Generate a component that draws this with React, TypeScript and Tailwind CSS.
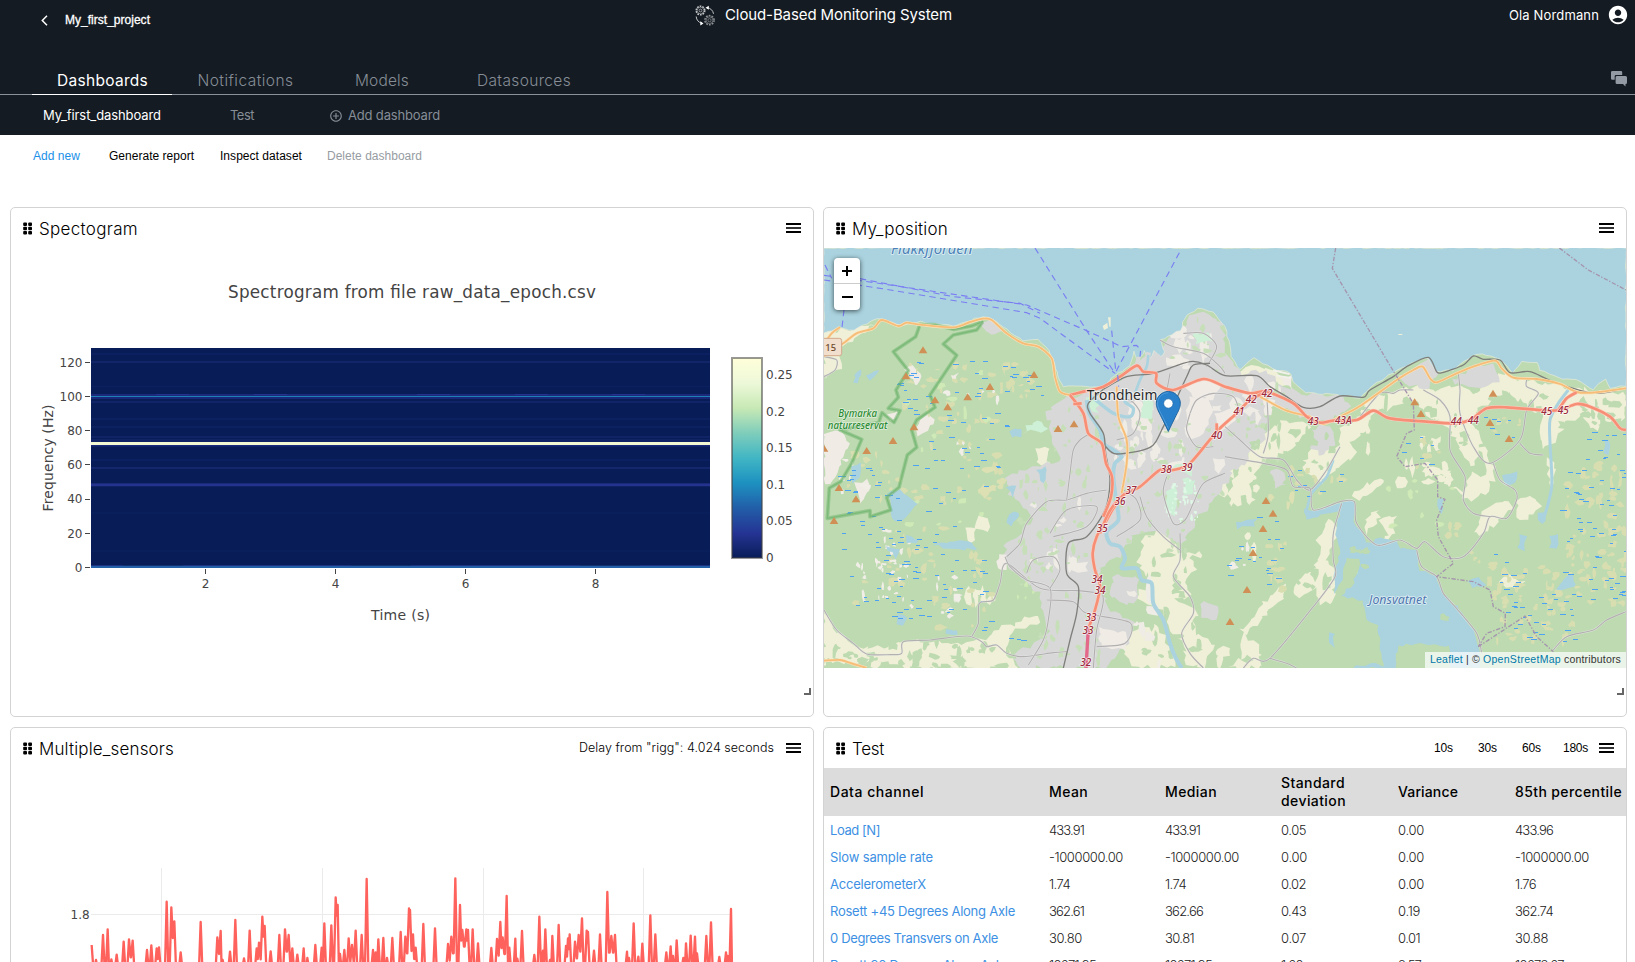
import { useLayoutEffect, useRef, useState } from "react";
import type { ReactNode } from "react";
import { MdAccountCircle, MdAddCircleOutline } from "react-icons/md";

type Pt = [number, number];

/* Spreads the letters of a single-line label over a given width. */
function Fit({ w, className = "", children }: { w: number; className?: string; children: string }) {
  const ref = useRef<HTMLSpanElement>(null);
  const [ls, setLs] = useState(0);
  useLayoutEffect(() => {
    const el = ref.current;
    if (!el) return;
    el.style.letterSpacing = "0px";
    const natural = el.getBoundingClientRect().width;
    const next = (w - natural) / children.length;
    el.style.letterSpacing = `${next}px`;
    setLs(next);
  }, [w, children]);
  return (
    <span ref={ref} className={`inline-block whitespace-pre ${className}`} style={{ letterSpacing: `${ls}px` }}>
      {children}
    </span>
  );
}

const INTER = "font-['Inter',sans-serif]";
const ARIAL = "font-['Liberation_Sans',sans-serif]";

function rng(seed: number) {
  let s = seed;
  return () => {
    s = (s * 1664525 + 1013904223) % 4294967296;
    return s / 4294967296;
  };
}

function parse(s: string): Pt[] {
  return s.split(" ").map((p) => p.split(",").map(Number) as Pt);
}

/* Jagged outline: each edge is cut into short steps that are pushed off the line. */
function rough(s: string, amp: number, seed = 7): string {
  const pts = parse(s);
  const r = rng(seed);
  const out: string[] = [];
  pts.forEach(([x, y], i) => {
    const [nx, ny] = pts[(i + 1) % pts.length];
    const n = Math.max(1, Math.round(Math.hypot(nx - x, ny - y) / 14));
    for (let k = 0; k < n; k++) {
      const t = k / n;
      out.push(`${(x + (nx - x) * t + (r() - 0.5) * amp).toFixed(1)},${(y + (ny - y) * t + (r() - 0.5) * amp).toFixed(1)}`);
    }
  });
  return out.join(" ");
}

/* Smooth curve through the points. */
function curve(s: string): string {
  const p = parse(s);
  let d = `M${p[0][0]},${p[0][1]}`;
  for (let i = 0; i < p.length - 1; i++) {
    const a = p[Math.max(0, i - 1)];
    const b = p[i];
    const c = p[i + 1];
    const e = p[Math.min(p.length - 1, i + 2)];
    d += ` C${b[0] + (c[0] - a[0]) / 7},${b[1] + (c[1] - a[1]) / 7} ${c[0] - (e[0] - b[0]) / 7},${c[1] - (e[1] - b[1]) / 7} ${c[0]},${c[1]}`;
  }
  return d;
}

/* x, y, width, height, count */
type Area = [number, number, number, number, number];

function specks(areas: Area[], min: number, max: number, seed: number): string {
  const r = rng(seed);
  let d = "";
  for (const [x, y, w, h, n] of areas) {
    for (let i = 0; i < n; i++) {
      const cx = x + r() * w;
      const cy = y + r() * h;
      const size = min + r() * (max - min);
      const k = 8;
      const stretch = 0.5 + r();
      for (let j = 0; j < k; j++) {
        const a = (j / k) * Math.PI * 2;
        const q = size * (0.45 + r() * 0.75);
        d += `${j ? "L" : "M"}${(cx + Math.cos(a) * q * stretch).toFixed(0)},${(cy + (Math.sin(a) * q) / stretch).toFixed(0)}`;
      }
      d += "Z";
    }
  }
  return d;
}

function dashes(areas: Area[], seed: number): string {
  const r = rng(seed);
  let d = "";
  for (const [x, y, w, h, n] of areas) {
    for (let i = 0; i < n; i++) {
      d += `M${Math.round((x + r() * w) / 3) * 3},${Math.round((y + r() * h) / 3) * 3 + 1.5}h${9 + Math.round(r() * 3) * 3}`;
    }
  }
  return d;
}

const SEA =
  "12,144 12,400 60,385 100,390 170,358 200,360 240,375 300,365 400,378 490,348 520,358 560,388 610,422 655,420 678,440 702,480 714,530 732,562 770,556 850,562 885,525 930,500 940,455 955,480 975,450 985,490 1000,450 1020,470 1035,455 1020,420 1080,390 1100,345 1135,325 1180,335 1215,380 1225,420 1235,470 1260,510 1300,475 1330,490 1370,510 1415,520 1420,545 1455,578 1560,585 1620,594 1660,555 1730,512 1790,482 1825,475 1850,515 1900,510 1955,468 1985,463 2040,478 2078,520 2105,485 2150,488 2160,510 2230,540 2270,537 2320,570 2355,535 2370,563 2418,557 2418,144";

const URBAN = [
  "1025,440 1080,395 1110,350 1150,335 1205,370 1225,470 1270,520 1340,515 1380,550 1450,580 1560,588 1590,620 1530,660 1460,660 1400,630 1330,610 1320,720 1260,760 1240,800 1225,850 1180,900 1130,960 1080,1040 1010,990 940,1000 910,1060 840,1100 850,1180 870,1230 940,1260 925,1340 850,1400 600,1404 575,1365 650,1330 690,1290 655,1180 560,1090 552,1040 600,1000 640,950 570,880 560,830 650,795 720,785 700,720 680,640 740,590 800,580 850,568 900,535 950,490",
  "480,360 515,362 545,392 500,402",
  "1740,530 1800,490 1830,475 1850,520 1830,560 1760,560",
  "1900,540 1960,500 2020,485 2035,540 1990,570 1920,555",
  "1480,690 1530,670 1540,730 1510,770 1475,750",
  "1215,560 1330,600 1340,700 1270,790 1215,830",
  "880,1130 950,1130 960,1190 920,1220 870,1180",
  "1145,1210 1195,1215 1190,1255 1150,1255",
  "1350,810 1390,820 1395,860 1365,860",
];

const FARM = [
  "1240,520 1300,490 1330,500 1400,535 1385,560 1330,560 1300,530",
  "1640,600 1730,570 1800,560 1850,570 1900,560 1960,575 2000,560 2060,510 2090,535 2230,560 2418,580 2418,660 2390,680 2350,660 2330,700 2290,650 2235,660 2210,730 2170,740 2160,640 2100,600 2050,570 2010,600 1960,640 1985,740 1960,800 1935,770 1890,690 1830,650 1800,620 1760,600 1720,620 1660,640 1640,700 1590,720 1610,760 1560,800 1500,850 1440,800 1480,750 1560,740 1560,690 1620,650",
  "1330,700 1400,660 1470,680 1440,720 1400,760 1330,790 1270,870 1240,920 1225,880 1260,800",
  "980,1000 1040,1000 1080,1050 1150,1060 1110,1080 1130,1110 1100,1130 1110,1190 1070,1200 1130,1240 1120,1290 1180,1340 1150,1400 1100,1400 1090,1320 1050,1300 1030,1230 1000,1220 940,1190 1000,1150 950,1080",
  "890,1310 930,1290 1010,1270 1040,1320 1070,1400 940,1400",
  "12,1220 40,1290 90,1330 150,1350 250,1330 330,1320 400,1330 490,1320 540,1290 640,1240 660,1260 580,1300 560,1340 600,1404 250,1404 200,1380 12,1390",
  "12,400 70,390 170,370 110,410 50,450 60,500 12,540",
  "1320,1230 1340,1200 1400,1150 1395,1190 1320,1260 1280,1310 1325,1340 1320,1404 1225,1404 1270,1360 1265,1290",
  "1530,960 1560,990 1530,1050 1520,1090 1550,1120 1540,1200 1500,1215 1490,1170 1430,1190 1425,1150 1480,1110 1500,1060 1490,1010",
  "1600,890 1640,850 1690,840 1670,870 1610,900",
  "1640,960 1670,930 1680,950 1640,1000",
  "1680,960 1730,950 1720,1000 1710,1020 1680,1040 1700,1000",
  "1900,860 1930,870 1960,820 1990,830 1995,790 1970,750 1990,740 2030,830 2000,870 1960,900 1930,900",
  "1990,930 2060,900 2080,920 2040,960 1980,1010 1965,990 1980,950",
  "2090,900 2140,890 2160,920 2120,960 2095,950",
  "2040,1140 2070,1130 2110,1150 2110,1160 2050,1160",
  "2185,780 2210,800 2200,860 2190,850",
  "1270,800 1320,790 1300,830 1250,920 1230,900",
  "650,750 690,740 685,790 660,800",
  "480,950 510,960 500,990 470,980",
  "440,985 465,980 470,1020 450,1030",
  "1190,820 1225,810 1225,880 1200,890",
];

const BARE = [
  "12,700 60,695 90,730 60,790 30,850 12,850",
  "255,505 275,490 305,530 290,560 270,530",
  "290,680 320,640 345,660 320,690 295,705",
  "395,530 415,520 405,555",
  "105,850 140,840 150,870 120,910",
  "1090,560 1150,540 1200,560 1180,600 1120,590",
  "1110,590 1165,590 1180,640 1150,700 1110,720 1095,640",
  "920,610 960,600 1000,640 990,700 940,690",
  "1185,640 1240,620 1250,660 1200,700",
  "840,1280 920,1300 920,1350 850,1340",
  "1370,530 1420,530 1415,570",
  "540,1060 560,1060 560,1110 530,1100",
  "200,640 235,630 240,650 215,660",
];

const PARK = [
  "1120,400 1170,395 1175,425 1130,430",
  "800,590 840,600 830,640 800,620",
  "1060,800 1120,780 1110,830",
  "1040,870 1070,860 1060,950 1035,930",
  "1090,830 1130,840 1110,890 1090,880",
  "970,600 1000,600 990,660 960,650",
  "620,680 670,660 680,690 610,700",
];

const LAKES = [
  "1455,925 1500,930 1560,908 1603,903 1603,960 1620,990 1640,1030 1680,1015 1730,1020 1740,1045 1790,1050 1800,1110 1850,1130 1865,1180 1910,1220 1960,1290 1975,1330 1980,1404 1890,1404 1890,1340 1800,1328 1735,1340 1725,1404 1690,1404 1675,1275 1640,1262 1625,1200 1562,1190 1600,1150 1620,1080 1580,1070 1565,1140 1545,1182 1540,1130 1562,1060 1548,1000 1560,935 1490,948 1455,960",
  "205,880 240,872 292,910 250,960 225,968 212,930",
  "340,1035 390,1022 440,1022 475,1045 400,1050",
  "560,860 590,860 575,890",
  "570,940 600,935 575,980 560,970",
  "570,690 605,685 600,710 575,710",
  "105,520 125,510 115,550 100,550",
  "140,530 180,510 150,545",
  "235,1245 260,1250 250,1280 232,1270",
  "380,1290 415,1292 410,1306 378,1304",
  "200,1040 240,1050 230,1080",
  "95,800 120,790 118,840 100,850",
  "260,1005 300,1020 290,1030 262,1025",
  "2048,825 2090,818 2085,850 2055,855",
  "2100,1000 2120,1010 2110,1050 2095,1040",
  "2190,1005 2215,1005 2210,1045 2190,1040",
  "2210,1165 2250,1120 2270,1150 2235,1170",
  "1945,1140 1975,1130 2000,1160 1960,1160",
  "1855,900 1870,895 1865,940 1855,930",
  "1530,1300 1545,1300 1540,1340 1530,1330",
  "2355,720 2370,720 2365,770 2355,760",
  "2155,940 2180,930 2170,970 2158,960",
  "650,810 680,800 675,850 660,840",
  "1250,965 1310,960 1300,980 1255,985",
  "1610,1395 1680,1392 1690,1404 1600,1404",
];

const RIVERS: [string, number][] = [
  ["800,600 808,640 840,690 850,730 880,750 905,770 885,790 880,830 888,900 895,960 860,995 870,1030 900,1040 915,1075 905,1105 950,1105 965,1140 995,1150 1000,1210 1030,1260 1050,1330 1065,1370 1085,1404", 12],
  ["815,590 880,640 930,650 940,625 915,605 920,575", 10],
  ["945,580 960,540 980,500 985,465", 8],
  ["1540,780 1520,830 1475,880 1460,930", 8],
  ["2245,570 2215,610 2190,660 2190,730 2195,860 2170,960", 9],
];

const MINOR = [
  "12,1230 50,1290 100,1330 140,1362 210,1364 245,1360 250,1325 330,1320 440,1308 485,1325 500,1340 530,1335 560,1360 610,1370 700,1358 740,1355",
  "455,1310 475,1270 478,1210 520,1200 540,1150 560,1090 660,1165 770,1172 850,1180",
  "560,1070 600,1030 620,970 680,905 740,900 800,880 860,870",
  "555,1070 570,1100 620,1140 690,1165 685,1260 670,1320 625,1395",
  "740,900 750,820 760,750 780,720 810,700",
  "690,1000 740,930 830,920 800,980 700,1010",
  "680,1200 760,1205 800,1240 930,1268 915,1330 830,1340",
  "830,1110 850,1200 830,1290 820,1404",
  "1080,1000 1080,1080 1060,1130 1110,1190 1120,1240 1085,1300 1110,1360 1150,1404",
  "960,890 980,950 1030,1010 1080,1050",
  "1040,830 1030,880 1060,970 1095,960 1120,910 1150,850 1215,820",
  "910,870 950,900 960,960 890,1010",
  "1020,420 1060,440 1150,460 1200,500 1215,520",
  "1090,400 1150,400 1190,440 1160,500",
  "1050,520 1040,590 1060,640 1030,660",
  "1110,640 1130,600 1180,580 1240,590 1260,640",
  "1110,640 1100,690 1130,740 1180,740",
  "890,600 930,600 960,640 940,700 890,720",
  "1215,680 1260,720 1320,770 1390,780 1430,840 1470,870 1520,810 1560,740",
  "1340,580 1345,700 1330,760",
  "1215,770 1330,790 1400,810 1420,860 1470,865 1480,930 1560,905 1603,905 1610,970 1670,1035 1740,1020 1790,1045 1815,1025 1870,1070 1930,1070 1990,1000 2010,950 2060,955 2090,900 2085,870 2040,840 2020,790",
  "1620,650 1680,580 1720,580 1740,570 1780,570",
  "1810,570 1860,600 1890,650 1890,750 1935,830 1930,900 1960,940 2010,950",
  "1915,520 1920,570 1920,640 1960,740 2010,790 2100,720 2120,630 2155,580 2120,560 2120,540",
  "2100,730 2130,760 2170,765",
  "1565,910 1540,1000 1540,1080 1545,1130 1480,1220 1350,1375 1300,1375 1270,1404",
  "1350,1375 1400,1390 1430,1404",
  "1790,1050 1805,1100 1850,1130 1870,1180 1905,1220 1970,1300 1985,1360",
  "2200,1350 2240,1310 2320,1290 2360,1260 2418,1235",
  "12,530 45,510 50,480 12,470",
  "690,1165 720,1110 700,1070 640,1080 620,1120",
];

const RAIL = [
  "850,568 920,530 1000,520 1110,485 1160,495 1215,527 1310,527 1350,560 1400,590 1450,622 1500,620 1560,588 1630,592 1650,570 1720,530 1760,500 1825,472 1850,515 1870,517 1930,495 1960,468 1990,478 2040,480 2070,518 2130,515 2200,545 2320,580 2418,565",
  "850,568 805,610 810,640 850,700 857,760 870,840 855,930 800,1010 745,1030 740,1120 775,1160 770,1240 750,1320 730,1404",
  "857,740 890,762 990,742 1030,680 1100,530 1120,495 1170,490",
];

const SECONDARY = [
  "12,432 35,400 60,382",
  "12,468 70,430 110,400 160,385 185,360 235,378 260,368 300,374 400,382 450,366 490,356 515,360 560,400 610,430 655,440 695,475 705,530 720,575 750,585",
  "890,560 895,650 920,720 920,790 905,880",
  "1320,590 1400,632 1470,650 1510,672 1560,650 1620,618 1730,540 1780,510 1808,500 1830,535 1850,547 1910,520 1960,500 2025,482 2045,505 2080,533 2150,537 2220,552 2270,576 2320,578 2418,565",
  "12,1382 60,1380 100,1392 140,1404",
];

const TRUNK = [
  "750,585 790,575 850,560 900,530 950,497 970,515 1008,520 1010,550 1060,570 1150,537 1215,560 1290,580 1340,575 1420,610 1460,650 1500,668 1540,662 1610,660 1660,632 1710,655 1820,665 1900,670 1950,660 2000,625 2060,622 2180,632 2220,630 2270,612 2310,620 2370,650 2400,685 2418,690",
  "1340,575 1290,600 1250,640 1190,695 1110,790 1060,810 1020,810 960,860 910,885 880,925 860,960 830,1010 818,1060 825,1110 840,1160 825,1230 805,1285",
  "900,890 865,940 840,1000",
  "750,585 790,640 805,700 845,730 858,790 876,830 873,890 850,950",
  "760,612 785,610",
  "2215,630 2240,595 2270,577",
  "1190,670 1190,700",
];

const FERRIES = [
  "12,226 620,315 800,392 905,440 950,436 962,450 960,470",
  "12,240 200,268 620,338 660,355 885,520",
  "120,236 400,290 600,310 660,340",
  "645,144 800,392 885,520",
  "1078,158 885,520",
  "875,392 888,520",
  "15,195 35,235",
  "72,330 66,382",
  "893,525 896,560",
];

const BORDERS = [
  "1547,144 1537,205 1712,500 1780,610 1783,690 1760,700 1730,770 1755,800 1815,790 1853,840 1853,890 1875,898 1850,960 1855,1010 1900,1090 1850,1130 1960,1145 2010,1170 2020,1220 2056,1240 2055,1280 2000,1300 1975,1340",
  "2218,144 2305,210 2418,270",
  "1975,1340 2115,1248 2150,1310 2200,1355",
];

const PEAKS: Pt[] = [
  [309, 450], [258, 528], [345, 600], [383, 621], [443, 591], [510, 560], [642, 524], [282, 681], [219, 722], [140, 752], [714, 686], [762, 672],
  [12, 745], [57, 863], [108, 897], [42, 962], [1784, 606], [1803, 641], [2019, 580], [2010, 668], [2067, 716], [1338, 902], [1359, 940],
  [1329, 986], [1299, 1058], [1281, 1169], [1230, 1265],
];

const EXITS: [string, number, number][] = [
  ["40", 1190, 717], ["41", 1257, 644], ["42", 1294, 610], ["42", 1341, 592], ["43", 1480, 676], ["43A", 1570, 671], ["44", 1909, 676],
  ["44", 1960, 672], ["45", 2180, 644], ["45", 2230, 642], ["39", 1101, 814], ["38", 1039, 818], ["37", 933, 882], ["36", 900, 914],
  ["35", 847, 997], ["34", 831, 1150], ["34", 840, 1182], ["33", 813, 1264], ["33", 804, 1303], ["32", 797, 1399],
];

const RESERVE =
  "490,364 455,378 400,388 345,374 300,374 287,410 220,455 265,512 228,570 235,592 205,625 240,632 222,667 186,638 176,668 60,690 125,718 95,790 62,845 28,864 22,955 150,932 150,950 212,930 200,892 237,862 262,765 290,742 275,690 290,660 345,622 330,585 410,466 370,432 400,405 470,390 488,366";

const MARSH: Area[] = [
  [230, 460, 170, 180, 14], [400, 480, 270, 110, 22], [310, 640, 250, 140, 18], [60, 760, 180, 150, 12], [230, 790, 320, 130, 14],
  [180, 970, 240, 160, 10], [350, 1060, 170, 240, 18], [100, 1050, 250, 220, 12], [1340, 1020, 60, 150, 12], [1400, 800, 170, 90, 12],
  [1780, 700, 80, 150, 6], [2240, 780, 178, 420, 74], [2000, 1070, 110, 130, 16], [2030, 1180, 230, 150, 34], [2090, 1030, 160, 140, 10],
  [2280, 1180, 130, 40, 5], [1880, 970, 60, 60, 5], [2000, 650, 100, 80, 6], [1950, 1050, 100, 70, 4],
];

const POOLS: Area[] = [
  [230, 470, 170, 180, 18], [400, 480, 270, 110, 20], [310, 640, 250, 140, 20], [30, 790, 200, 120, 20], [230, 790, 320, 130, 12],
  [60, 930, 340, 120, 22], [190, 990, 100, 180, 15], [90, 1100, 300, 160, 26], [340, 1060, 150, 240, 18], [1210, 950, 190, 210, 20],
  [1400, 800, 170, 90, 10], [2220, 760, 198, 440, 60], [2010, 1060, 110, 130, 10], [2040, 1180, 230, 150, 28], [1990, 650, 100, 100, 7],
  [1730, 650, 120, 150, 6], [2290, 670, 120, 110, 8], [480, 1220, 160, 110, 6],
];

const WHITES: Area[] = [
  [180, 980, 90, 170, 16], [100, 1080, 190, 140, 22], [350, 1130, 70, 130, 12], [30, 780, 120, 100, 8], [400, 720, 60, 60, 4],
  [380, 560, 160, 50, 5], [1215, 1030, 80, 80, 5], [960, 1380, 60, 20, 2],
];

const CITY_GREEN: Area[] = [
  [600, 800, 230, 180, 26], [600, 980, 200, 180, 30], [660, 1180, 180, 200, 24], [880, 660, 330, 270, 50], [700, 620, 140, 130, 14],
  [1040, 360, 170, 160, 18], [1215, 560, 180, 230, 22], [920, 940, 180, 120, 14],
];

const FARM_GREEN: Area[] = [
  [1620, 600, 320, 150, 34], [1960, 560, 240, 120, 20], [2210, 600, 200, 100, 16], [1280, 680, 260, 130, 22], [970, 1040, 170, 330, 26],
  [20, 1330, 560, 70, 40], [1280, 1200, 100, 180, 6], [1430, 1080, 100, 120, 8],
];

const FARM_BITS: Area[] = [
  [1170, 760, 60, 160, 8], [160, 1340, 420, 60, 24], [440, 1160, 80, 70, 6], [1180, 1340, 40, 50, 2], [1640, 720, 330, 130, 12],
  [1250, 830, 100, 80, 5], [1860, 780, 60, 60, 5], [1270, 1000, 40, 110, 3],
];

const CITY_LIGHT: Area[] = [
  [880, 600, 320, 200, 30], [1030, 380, 150, 130, 14], [620, 870, 160, 280, 12], [1230, 540, 140, 120, 10], [850, 1100, 160, 260, 8],
];

function MapDrawing() {
  return (
    <svg className="block h-[420px] w-[802px]" viewBox="12 144 2406 1260" fill="none" strokeLinejoin="round" strokeLinecap="butt">
      <rect x="0" y="100" width="2430" height="1320" fill="#bddab1" />
      {FARM.map((p, i) => (
        <polygon key={i} points={rough(p, 17, i + 3)} fill="#eff0d7" />
      ))}
      <path d={specks(FARM_BITS, 9, 22, 5)} fill="#eff0d7" />
      {URBAN.map((p, i) => (
        <polygon key={i} points={rough(p, 16, i + 30)} fill="#d8d8d8" />
      ))}
      {BARE.map((p, i) => (
        <polygon key={i} points={rough(p, 10, i + 50)} fill="#f0ece5" />
      ))}
      <path d={specks(FARM_GREEN, 7, 18, 9)} fill="#bddab1" />
      <path d={specks(CITY_LIGHT, 8, 26, 91)} fill="#efece5" />
      <path d={specks(CITY_GREEN, 4, 13, 12)} fill="#c6dfb9" />
      {PARK.map((p, i) => (
        <polygon key={i} points={rough(p, 14, i + 70)} fill="#cdf0d6" />
      ))}
      <path d={specks([[1030, 840, 110, 130, 34]], 3, 8, 15)} fill="#dff8e6" />
      <path d={specks(MARSH, 5, 15, 21)} fill="#d8deb0" />
      <path d={specks([[490, 800, 60, 110, 9], [1330, 880, 90, 40, 3]], 10, 20, 26)} fill="#dce0b2" />
      <path d={specks(WHITES, 4, 11, 23)} fill="#f1eee8" />
      <path d={specks([[200, 500, 350, 500, 14], [1700, 830, 200, 200, 8], [550, 1130, 100, 100, 4], [1580, 1110, 50, 60, 5]], 5, 13, 61)} fill="#cfeab6" />
      {LAKES.map((p, i) => (
        <polygon key={i} points={rough(p, 9, i + 90)} fill="#aad3df" />
      ))}
      <path d={specks([[1590, 1030, 50, 80, 7], [1840, 1230, 40, 40, 2]], 7, 18, 33)} fill="#bddab1" />
      <polygon points={rough(SEA, 5, 4)} fill="#aad3df" stroke="#e9ebdc" strokeWidth="2" />
      <path d="M935,530 l15,-60 12,0 -8,40 10,0 15,-55 14,3 -8,45 14,-4 12,-38 10,4 -12,60z" fill="#d8d8d8" />
      <path d="M848,378 l14,-10 2,16 -12,6zM864,352 l8,0 0,28 -4,0zM1735,402h12v3h-12z" fill="#eff0d7" />
      <path d="M1360,508 l50,12 -2,5 -50,-11zM1370,524 l45,8 -2,5 -45,-8z" fill="#f3f1ec" />
      {RIVERS.map(([p, w], i) => (
        <path key={i} d={curve(p)} stroke="#aad3df" strokeWidth={w} />
      ))}
      <path d={dashes(POOLS, 44)} stroke="#4da3f2" strokeWidth="3" />
      <polyline points={RESERVE} stroke="#6db36c" strokeWidth="11" opacity=".5" />
      <polyline points={RESERVE} stroke="#62ad62" strokeWidth="4" opacity=".5" />
      {MINOR.map((p, i) => (
        <g key={i}>
          <path d={curve(p)} stroke="#ececec" strokeWidth="6" opacity=".7" />
          <path d={curve(p)} stroke="#b3b0b0" strokeWidth="3.4" />
        </g>
      ))}
      {RAIL.map((p, i) => (
        <path key={i} d={curve(p)} stroke="#7f7f7c" strokeWidth="4" />
      ))}
      {SECONDARY.map((p, i) => (
        <g key={i}>
          <path d={curve(p)} stroke="#fbe3bd" strokeWidth="9" />
          <path d={curve(p)} stroke="#f6bd78" strokeWidth="5.5" />
        </g>
      ))}
      {TRUNK.map((p, i) => (
        <g key={i}>
          <path d={curve(p)} stroke="#fbcfc0" strokeWidth="11" />
          <path d={curve(p)} stroke="#f78f77" strokeWidth="8" />
        </g>
      ))}
      <path d="M805,1285 L798,1404" stroke="#e4688a" strokeWidth="10" />
      {FERRIES.map((p, i) => (
        <polyline key={i} points={p} stroke="#7b7ef2" strokeWidth="3.4" strokeDasharray="19 13" />
      ))}
      {BORDERS.map((p, i) => (
        <polyline key={i} points={p} stroke="#a594ad" strokeWidth="4" strokeDasharray="13 5 4 5" />
      ))}
      {PEAKS.map(([x, y], i) => (
        <path key={i} d={`M${x},${y - 11} l13,21 h-26z`} fill="#d08f55" />
      ))}
      <rect x="-10" y="415" width="75" height="52" rx="7" fill="#f2decd" stroke="#d3a98a" strokeWidth="3" />
      <g fontFamily="'Noto Sans', sans-serif" paintOrder="stroke" strokeLinejoin="round" textAnchor="middle">
        <text x="32" y="453" fontSize="28" fontWeight="500" fill="#6b4a2b">15</text>
        <g fontStyle="italic" fontSize="31" fontWeight="500" fill="#9c2a3c" stroke="#fff" strokeWidth="5" strokeOpacity=".7">
          {EXITS.map(([t, x, y], i) => (
            <text key={i} x={x} y={y} textLength={t.length * 16.5} lengthAdjust="spacingAndGlyphs">{t}</text>
          ))}
        </g>
        <text x="335" y="161" fontSize="42" fontStyle="italic" fill="#4c82b8" stroke="#fff" strokeWidth="5" strokeOpacity=".6" textLength="244" lengthAdjust="spacingAndGlyphs">Flakkfjorden</text>
        <text x="1733" y="1212" fontSize="37" fontStyle="italic" fill="#4f77b0" stroke="#fff" strokeWidth="5" strokeOpacity=".6" textLength="172" lengthAdjust="spacingAndGlyphs">Jonsvatnet</text>
        <g fontSize="31" fontStyle="italic" fontWeight="500" fill="#2c8c33" stroke="#fff" strokeWidth="5" strokeOpacity=".55">
          <text x="113" y="652" textLength="117" lengthAdjust="spacingAndGlyphs">Bymarka</text>
          <text x="113" y="688" textLength="179" lengthAdjust="spacingAndGlyphs">naturreservat</text>
        </g>
        <text x="906" y="600" fontSize="41" fill="#2b2b2b" stroke="#fff" strokeWidth="6" strokeOpacity=".65" textLength="212" lengthAdjust="spacingAndGlyphs">Trondheim</text>
      </g>
      <g transform="translate(1007.5 573) scale(3)">
        <path d="M12.5,.5C5.9,.5 .5,5.9 .5,12.4c0,5.6 3,8.6 12,28 9-19.400 12-22.400 12-28C24.500,5.900 19.100,.5 12.500,.5z" fill="#2a81cb" stroke="#1f659f" strokeWidth="1" />
        <path d="M12.500,1.700C6.600,1.700 1.700,6.500 1.700,12.400c0,5 2.800,8 10.800,25" stroke="#5ea7e2" strokeWidth=".8" opacity=".8" />
        <circle cx="12.500" cy="12.500" r="4.700" fill="#fff" stroke="#2069a8" strokeWidth=".7" />
      </g>
    </svg>
  );
}

const SPEC_ROWS: [number, number, string][] = [
  [353, 2, "#0a2060"], [361, 2, "#122568"], [386, 1, "#0b2060"], [394, 2, "#1b2a7a"], [396, 1, "#1f80b5"], [397, 2, "#17287a"],
  [401, 2, "#102467"], [418, 2, "#0b2160"], [426, 2, "#0b2160"], [436, 2, "#0f2365"], [439, 3, "#0f2365"], [442, 3, "#f3f9d3"],
  [445, 1, "#1a2a78"], [446, 1, "#0f2368"], [459, 2, "#0b2060"], [467, 2, "#14276d"], [483, 1, "#1b2a78"], [484, 2, "#24338e"],
  [486, 1, "#0e2264"], [512, 2, "#091f5c"], [550, 2, "#091f5c"], [565, 1, "#1b3280"], [566, 2, "#2360a8"],
];

function Spectrogram() {
  return (
    <svg className="block h-[468px] w-[802px]" viewBox="11 248 802 468" fontFamily="'DejaVu Sans', Verdana, sans-serif" fill="#444">
      <text x="412" y="298" fontSize="16.800" textAnchor="middle" textLength="368">Spectrogram from file raw_data_epoch.csv</text>
      <g shapeRendering="crispEdges">
        <rect x="91" y="348" width="619" height="220" fill="#081d58" />
        {SPEC_ROWS.map(([y, h, c], i) => (
          <rect key={i} x="91" y={y} width="619" height={h} fill={c} />
        ))}
        {[156, 254, 417, 515, 612].map((x) => (
          <rect key={x} x={x} y="394" width="33" height="1" fill="#24338e" />
        ))}
        {[123, 351, 580].map((x) => (
          <rect key={x} x={x} y="565" width="60" height="1" fill="#123070" />
        ))}
      </g>
      <g fontSize="12">
        {["120", "100", "80", "60", "40", "20", "0"].map((t, i) => (
          <g key={t}>
            <text x="82.500" y={367 + i * 34.100} textAnchor="end">{t}</text>
            <rect x="85" y={Math.round(362 + i * 34.150)} width="5" height="1" shapeRendering="crispEdges" />
          </g>
        ))}
        {["2", "4", "6", "8"].map((t, i) => (
          <g key={t}>
            <text x={205.500 + i * 130} y="588" textAnchor="middle">{t}</text>
            <rect x={205 + i * 130} y="569" width="1" height="5" shapeRendering="crispEdges" />
          </g>
        ))}
        {["0.25", "0.2", "0.15", "0.1", "0.05", "0"].map((t, i) => (
          <text key={t} x="766" y={379 + i * 36.600}>{t}</text>
        ))}
      </g>
      <text x="400.500" y="620" fontSize="14" textAnchor="middle" textLength="59">Time (s)</text>
      <text transform="translate(53 458) rotate(-90)" fontSize="14" textAnchor="middle" textLength="107">Frequency (Hz)</text>
      <defs>
        <linearGradient id="scale" x1="0" y1="1" x2="0" y2="0">
          <stop offset="0" stopColor="#081d58" />
          <stop offset=".125" stopColor="#253494" />
          <stop offset=".25" stopColor="#225ea8" />
          <stop offset=".375" stopColor="#1d91c0" />
          <stop offset=".5" stopColor="#41b6c4" />
          <stop offset=".625" stopColor="#7fcdbb" />
          <stop offset=".75" stopColor="#c7e9b4" />
          <stop offset=".875" stopColor="#edf8d9" />
          <stop offset="1" stopColor="#ffffd9" />
        </linearGradient>
      </defs>
      <rect x="732" y="358" width="30" height="200" fill="url(#scale)" stroke="#444" strokeOpacity=".55" strokeWidth="2" />
    </svg>
  );
}

const LEFT_TIPS =
  "275,675 288,720 309,645 323,628 334,718 350,704 371,665 387,658 398,662 441,690 454,676 470,685 477,682 500,545 514,562 523,604 542,697 602,606 652,652 662,633 668,720 690,695 706,600 732,715 749,632 770,685 777,668 787,590 794,618 812,694 838,645 855,628 866,645 877,685 892,704 911,685 922,714 946,675 965,683 973,610 994,616 1007,532 1013,555 1020,702 1033,690 1046,655 1056,675 1067,632 1085,645 1100,477 1119,690 1127,697 1135,658 1150,654 1161,714 1177,654 1202,636 1216,650 1227,565 1239,643 1247,683";
const RIGHT_TIPS =
  "0,570 9,643 16,685 40,612 75,625 114,672 124,650 136,475 150,555 157,630 169,628 174,630 188,628 204,670 244,684 261,657 271,606 278,652 290,528 298,683 316,656 322,716 336,633 373,705 388,590 399,692 406,628 420,720 427,648 446,615 468,678 474,655 479,643 495,665 506,645 516,595 530,632 534,636 552,692 570,643 592,516 604,648 615,645 651,695 657,714 671,610 685,710 697,671 721,586 736,643 769,697 782,679 789,708 800,661 820,714 828,670 842,647 855,650 861,700 889,648 903,607 928,711 948,697 953,708 963,567";

function sensorTrace(): string {
  const tips: Pt[] = [...parse(LEFT_TIPS), ...parse(RIGHT_TIPS).map(([x, y]) => [x + 1230, y] as Pt)].sort((a, b) => a[0] - b[0]);
  let d = `M${tips[0][0]},${tips[0][1]}`;
  tips.forEach(([x, y], i) => {
    if (i === 0) return;
    const [px, py] = tips[i - 1];
    const gap = x - px;
    const low = gap < 8 ? Math.max(y, py) + 32 : gap < 13 ? Math.max(y, py) + 50 : 745;
    const reach = Math.min(5, gap / 2);
    d += ` L${px + reach},${low} L${x - reach},${low} L${x},${y}`;
  });
  return d + ` L${tips[tips.length - 1][0] + 4},800`;
}

function Sensors() {
  return (
    <svg className="block h-[194px] w-[802px]" viewBox="33 144 2406 582" fill="none">
      <path d="M484.500,444V740M967.500,444V740M1450.500,444V740M1930.500,444V740M273,583.500H2196" stroke="#ebebeb" strokeWidth="3" />
      <text x="269" y="597" fontSize="36" fontFamily="'DejaVu Sans', Verdana, sans-serif" fill="#444" textAnchor="end">1.8</text>
      <path d={sensorTrace()} stroke="#ff625c" strokeWidth="7" strokeLinejoin="round" />
    </svg>
  );
}

function DragHandle() {
  return (
    <svg className="h-[13px] w-[9px] shrink-0" viewBox="0 0 9 13">
      {[0, 5].map((x) => [0.5, 4.7, 8.900].map((y) => <rect key={`${x}-${y}`} x={x + 0.2} y={y} width="3.800" height="3.500" rx=".9" fill="#000" />))}
    </svg>
  );
}

function Burger() {
  return (
    <div className="flex w-[15px] shrink-0 flex-col gap-[2px]">
      <i className="h-[2px] bg-black" />
      <i className="h-[2px] bg-[#333]" />
      <i className="h-[2px] bg-black" />
    </div>
  );
}

function Card({ title, width, extra, resize, children }: { title: string; width: number; extra?: ReactNode; resize?: boolean; children: ReactNode }) {
  return (
    <section className="relative h-[510px] overflow-hidden rounded-[5px] border border-[#d3d3d3] bg-white">
      <header className="flex h-10 items-center pr-3 pl-3">
        <DragHandle />
        <Fit w={width} className={`ml-[7px] pt-[2px] text-[17px] leading-6 font-light text-black ${INTER}`}>{title}</Fit>
        <div className="ml-auto flex items-center">
          {extra}
          <Burger />
        </div>
      </header>
      {children}
      {resize && <i className="absolute right-[2px] bottom-[21px] h-[7px] w-[7px] border-r-2 border-b-2 border-[#666]" />}
    </section>
  );
}

const COLS = "grid grid-cols-[219px_116px_116px_117px_117px_111px] pl-[6px]";

const ROWS: [string, number][][] = [
  [["Load [N]", 50], ["433.91", 35], ["433.91", 35], ["0.05", 25], ["0.00", 26], ["433.96", 38]],
  [["Slow sample rate", 103], ["-1000000.00", 74], ["-1000000.00", 74], ["0.00", 26], ["0.00", 26], ["-1000000.00", 74]],
  [["AccelerometerX", 96], ["1.74", 21], ["1.74", 21], ["0.02", 25], ["0.00", 26], ["1.76", 21]],
  [["Rosett +45 Degrees Along Axle", 185], ["362.61", 35], ["362.66", 38], ["0.43", 25], ["0.19", 22], ["362.74", 38]],
  [["0 Degrees Transvers on Axle", 168], ["30.80", 33], ["30.81", 29], ["0.07", 25], ["0.01", 22], ["30.88", 33]],
  [["Rosett 90 Degrees Along Axle", 176], ["10671.95", 47], ["10671.95", 47], ["1.60", 22], ["2.57", 23], ["10673.67", 49]],
];

function StatsTable() {
  return (
    <div className={INTER}>
      <div className={`${COLS} h-12 items-center bg-[#dcdcdc] text-[14px] leading-[18px] font-medium text-black`}>
        <div><Fit w={94}>Data channel</Fit></div>
        <div><Fit w={39}>Mean</Fit></div>
        <div><Fit w={52}>Median</Fit></div>
        <div className="flex flex-col items-start"><Fit w={64}>Standard</Fit><Fit w={65}>deviation</Fit></div>
        <div><Fit w={60}>Variance</Fit></div>
        <div><Fit w={107}>85th percentile</Fit></div>
      </div>
      {ROWS.map((row) => (
        <div key={row[0][0]} className={`${COLS} h-[27px] items-center text-[13px] leading-[18px] text-[#222]`}>
          {row.map(([t, w], i) => (
            <div key={i} className={i === 0 ? "text-[#3d90e3]" : "font-light"}><Fit w={w}>{t}</Fit></div>
          ))}
        </div>
      ))}
    </div>
  );
}

function GearsLogo() {
  return (
    <svg className="h-[21px] w-[20px]" viewBox="0 0 20 21" fill="none" stroke="#c3c6c9">
      <circle cx="5.500" cy="5.500" r="4.300" strokeWidth="1.500" strokeDasharray="1.700 1" />
      <circle cx="5.500" cy="5.500" r="3.300" strokeWidth=".8" opacity=".7" />
      <circle cx="5.500" cy="5.500" r="1.400" strokeWidth=".7" />
      <g opacity=".7">
        <circle cx="14.500" cy="15.200" r="4.600" strokeWidth="1.500" strokeDasharray="1.800 1.100" />
        <circle cx="14.500" cy="15.200" r="3.400" strokeWidth=".7" />
        <circle cx="14.500" cy="15.200" r="1.600" strokeWidth=".7" />
      </g>
      <path d="M12,2.800c3.500,.2 6,2.700 6.500,6M1.200,11.500c.2,3.500 2.300,6 5.800,6.700" />
      <path d="M10.500,2.800l3.300-2v4zM8.500,18.500l-3.200-2.200v4.200z" fill="#fff" stroke="none" />
    </svg>
  );
}

export default function App() {
  return (
    <div className={`h-[962px] w-[1635px] overflow-hidden bg-white ${INTER}`}>
      <div className="h-[135px] bg-[#141b22]">
        <div className="flex h-[60px] items-start text-white">
          <div className="flex h-10 w-[695px] items-center pl-[41px]">
            <svg className="h-[11px] w-[7px]" viewBox="0 0 7 11" fill="none" stroke="#fff" strokeWidth="1.500"><path d="M6,.8 1.300,5.500 6,10.200" /></svg>
            <Fit w={85} className={`ml-[17px] text-[12px] [-webkit-text-stroke:0.3px_white] ${ARIAL}`}>My_first_project</Fit>
          </div>
          <div className="flex h-[30px] items-center">
            <GearsLogo />
            <Fit w={227} className="ml-[10px] text-[15px]">Cloud-Based Monitoring System</Fit>
          </div>
          <div className="mr-[6px] ml-auto flex h-[30px] items-center">
            <Fit w={90} className="mr-[8px] pt-px text-[13px]">Ola Nordmann</Fit>
            <MdAccountCircle size={22} />
          </div>
        </div>
        <nav className="flex h-[35px] border-b border-[#8b919b] pl-8 text-[15.500px] text-[#868d97]">
          <div className="-mb-px flex h-[35px] w-[140px] justify-center border-b border-white pt-[10px] pl-px leading-[22px] text-white"><Fit w={91}>Dashboards</Fit></div>
          <div className="flex w-[146px] justify-center pt-[10px] pl-px leading-[22px]"><Fit w={96} className="font-light">Notifications</Fit></div>
          <div className="flex w-[128px] justify-center pt-[10px] leading-[22px]"><Fit w={54} className="font-light">Models</Fit></div>
          <div className="flex w-[155px] justify-center pt-[10px] pl-px leading-[22px]"><Fit w={94} className="font-light">Datasources</Fit></div>
          <svg className="mt-[11px] mr-2 ml-auto h-[16px] w-[16px]" viewBox="0 0 16 16" fill="#939aa4">
            <path d="M1.500,0h8.500q1.200,0 1.200,1.200V4H5Q3.700,4 3.700,5.300V8.700H1.200Q0,8.700 0,7.500V1.300Q0,0 1.500,0z" />
            <path d="M6,5h8.500Q16,5 16,6.500v5.200Q16,13 14.500,13v2.500L12,13H6Q4.600,13 4.600,11.700V6.400Q4.600,5 6,5z" />
          </svg>
        </nav>
        <div className="flex h-10 items-center pt-px pl-[43px] text-[13px] text-[#868d97]">
          <Fit w={118} className="text-white">My_first_dashboard</Fit>
          <Fit w={24} className="ml-[69px]">Test</Fit>
          <MdAddCircleOutline size={14} className="ml-[75px]" />
          <Fit w={92} className="ml-[5px]">Add dashboard</Fit>
        </div>
      </div>
      <div className={`mb-[30px] flex h-[42px] items-center pl-[33px] text-[12px] text-black ${ARIAL}`}>
        <Fit w={47} className="text-[#1b8fe8]">Add new</Fit>
        <Fit w={85} className="ml-[29px]">Generate report</Fit>
        <Fit w={82} className="ml-[26px]">Inspect dataset</Fit>
        <Fit w={95} className="ml-[25px] text-[#969ca2]">Delete dashboard</Fit>
      </div>
      <main className="grid grid-cols-[804px_804px] gap-x-[9px] gap-y-[10px] pl-[10px]">
        <Card title="Spectogram" width={99} resize>
          <Spectrogram />
        </Card>
        <Card title="My_position" width={96} resize>
          <div className="relative">
            <MapDrawing />
            <div className="absolute top-[10px] left-[10px] w-[26px] overflow-visible rounded-[4px] bg-white shadow-[0_1px_5px_rgba(0,0,0,0.65)]">
              <div className="flex h-[26px] items-center justify-center border-b border-[#ccc]">
                <svg className="h-[10px] w-[10px]" viewBox="0 0 10 10" fill="#000"><path d="M4,0h2v4h4v2H6v4H4V6H0V4h4z" /></svg>
              </div>
              <div className="flex h-[26px] items-center justify-center"><i className="h-[2px] w-[11px] bg-black" /></div>
            </div>
            <div className={`absolute right-0 bottom-0 flex h-4 w-[201px] items-center bg-white/70 pl-[5px] text-[10.500px] text-[#333] ${ARIAL}`}>
              <Fit w={33} className="text-[#0078a8]">Leaflet</Fit>
              <Fit w={20}>{" | © "}</Fit>
              <Fit w={78} className="text-[#0078a8]">OpenStreetMap</Fit>
              <Fit w={60}>{" contributors"}</Fit>
            </div>
          </div>
        </Card>
        <Card title="Multiple_sensors" width={135} extra={<Fit w={195} className="mr-3 pt-px text-[12.500px] font-light text-black">{'Delay from "rigg": 4.024 seconds'}</Fit>}>
          <Sensors />
        </Card>
        <Card
          title="Test"
          width={32}
          extra={
            <div className={`mr-[11px] flex gap-[25px] text-[12px] text-black ${ARIAL}`}>
              <Fit w={19}>10s</Fit>
              <Fit w={19}>30s</Fit>
              <Fit w={19}>60s</Fit>
              <Fit w={25} className="-ml-[3px]">180s</Fit>
            </div>
          }
        >
          <StatsTable />
        </Card>
      </main>
    </div>
  );
}
